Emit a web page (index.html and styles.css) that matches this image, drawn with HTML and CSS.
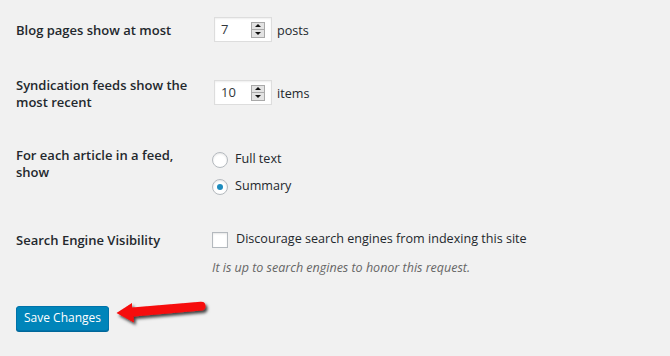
FILE: index.html
```html
<!DOCTYPE html>
<html lang="en">
<head>
  <meta charset="UTF-8">
  <meta name="viewport" content="width=device-width, initial-scale=1.0">
  <title>Reading Settings</title>
  <link rel="stylesheet" href="styles.css">
</head>
<body>
  <div class="page">
    <form class="settings">
      <div class="setting setting-first">
        <div class="setting-label label-posts">Blog pages show at most</div>
        <div class="setting-field">
          <span class="number-input">
            <span class="number-value">7</span>
            <span class="spinner"><span class="spin spin-up"></span><span class="spin spin-down"></span></span>
          </span>
          <span class="unit">posts</span>
        </div>
      </div>

      <div class="setting">
        <div class="setting-label label-feeds">Syndication feeds show the<br>most recent</div>
        <div class="setting-field field-feeds">
          <span class="number-input">
            <span class="number-value">10</span>
            <span class="spinner"><span class="spin spin-up"></span><span class="spin spin-down"></span></span>
          </span>
          <span class="unit">items</span>
        </div>
      </div>

      <div class="setting setting-radios">
        <div class="setting-label label-feeds">For each article in a feed,<br>show</div>
        <div class="setting-field field-radios">
          <label class="choice"><span class="radio"></span>Full text</label>
          <label class="choice"><span class="radio is-checked"></span>Summary</label>
        </div>
      </div>

      <div class="setting setting-last">
        <div class="setting-label label-search">Search Engine Visibility</div>
        <div class="setting-field field-search">
          <label class="choice"><span class="checkbox"></span>Discourage search engines from indexing this site</label>
          <p class="description">It is up to search engines to honor this request.</p>
        </div>
      </div>

      <div class="submit">
        <button type="button" class="button-primary">Save Changes</button>
      </div>
    </form>

    <!-- annotation arrow pointing at the button -->
    <svg class="annotation" viewBox="0 0 670 356" width="670" height="356">
      <defs>
        <filter id="arrow-shadow" x="-20%" y="-50%" width="140%" height="200%">
          <feDropShadow dx="2" dy="2.5" stdDeviation="1.4" flood-color="#000" flood-opacity="0.75"/>
        </filter>
      </defs>
      <path filter="url(#arrow-shadow)" fill="#f60909"
            d="M116.5,313 L132,303 L132,307.5 L200.5,301.8 Q205.5,301.5 205.5,306 Q205.5,310.3 201,310.6 L133.5,316.6 L134,322.5 Z"/>
    </svg>
  </div>
</body>
</html>
```

FILE: styles.css
```css
:root {
  --bg-color: #f1f1f1;
  --text-color: #23282d;
  --muted-color: #666666;
  --input-border: #dddddd;
  --control-border: #b4b9be;
  --primary: #0085ba;
  --primary-dark: #0073aa;
  --radio-dot: #1e8cbe;
}
* { box-sizing: border-box; }
body {
  margin: 0;
  background: var(--bg-color);
  color: var(--text-color);
  font-family: 'Open Sans', 'Noto Sans', sans-serif;
  font-size: 12.6px;
}
.page {
  position: relative;
  width: 670px;
  height: 356px;
  overflow: hidden;
}
.settings {
  margin: 0;
  padding: 17px 0 0 16px;
}
.setting {
  display: grid;
  grid-template-columns: 196px 1fr;
  align-items: start;
  padding-bottom: 35px;
  line-height: 17px;
}
.setting-first { padding-bottom: 34px; }
.setting-radios { padding-bottom: 35px; }
.setting-last { padding-bottom: 0; }
.setting-label {
  font-weight: 600;
  font-size: 13px;
}
.label-posts { margin-top: 5px; }
.label-feeds { margin-top: 1px; }
.label-search { margin-top: 2px; }

.setting-field {
  display: flex;
  align-items: center;
}
.field-feeds { margin-top: 4px; }

.number-input {
  display: inline-flex;
  align-items: center;
  justify-content: space-between;
  width: 58px;
  height: 25px;
  margin-left: 2px;
  padding: 0 6px 0 6px;
  background: #fff;
  border: 1px solid var(--input-border);
  box-shadow: inset 0 1px 2px rgba(0,0,0,0.07);
  color: #32373c;
  font-size: 13px;
}
.spinner {
  display: flex;
  flex-direction: column;
  width: 14px;
  height: 16px;
  border: 1px solid #a9a9a9;
  background: #e3e3e3;
}
.spin {
  flex: 1;
  display: flex;
  align-items: center;
  justify-content: center;
}
.spin-up { border-bottom: 1px solid #a9a9a9; }
.spin::before {
  content: '';
  border-left: 3px solid transparent;
  border-right: 3px solid transparent;
}
.spin-up::before { border-bottom: 3px solid #111; }
.spin-down::before { border-top: 3px solid #111; }
.unit {
  margin-left: 5px;
  padding-top: 1px;
}

.field-radios {
  flex-direction: column;
  align-items: flex-start;
  gap: 9px;
  margin-top: 4px;
}
.choice {
  display: flex;
  align-items: flex-start;
  gap: 7px;
}
.radio, .checkbox {
  flex: none;
  width: 16px;
  height: 16px;
  margin-top: 2px;
  background: #fff;
  border: 1px solid var(--control-border);
  box-shadow: inset 0 1px 2px rgba(0,0,0,0.1);
}
.radio {
  border-radius: 50%;
  display: flex;
  align-items: center;
  justify-content: center;
}
.radio.is-checked::before {
  content: '';
  width: 6px;
  height: 6px;
  border-radius: 50%;
  background: var(--radio-dot);
}
.choice .checkbox { margin-right: 1px; }

.field-search {
  flex-direction: column;
  align-items: flex-start;
}
.description {
  margin: 11px 0 0;
  font-style: italic;
  font-size: 12.5px;
  color: var(--muted-color);
}

.submit { padding-top: 30px; }
.button-primary {
  height: 25px;
  padding: 0 7px 1px;
  font-family: inherit;
  font-size: 12px;
  line-height: 22px;
  color: #fff;
  background: var(--primary);
  border: 1px solid var(--primary-dark);
  border-radius: 3px;
  box-shadow: 0 1px 0 #006799;
  cursor: pointer;
}

.annotation {
  position: absolute;
  top: 0;
  left: 0;
  pointer-events: none;
}
```
